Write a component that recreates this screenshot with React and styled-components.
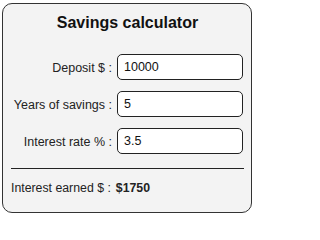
import { Fragment, useState } from "react";
import styled, { createGlobalStyle } from "styled-components";

const GlobalStyle = createGlobalStyle`
    body {
        margin: 0;
        background: #fff;
        font-family: "Liberation Sans", Arial, sans-serif;
    }
`;

const Card = styled.div`
    box-sizing: border-box;
    width: 250px;
    height: 210px;
    margin: 3px 0 0 2px;
    padding: 10px 7px 0 8px;
    background-color: #f3f3f3;
    border: 1px solid #333;
    border-radius: 10px;
    color: #222;
`;

const Title = styled.h1`
    margin: 0 0 22px;
    font-size: 16px;
    line-height: 18px;
    font-weight: bold;
    text-align: center;
    color: #111;
`;

const Form = styled.div`
    display: grid;
    grid-template-columns: 1fr 126px;
    column-gap: 5px;
    row-gap: 11px;
    align-items: center;
    padding-right: 1px;
`;

const Label = styled.label`
    font-size: 12.5px;
    text-align: right;
    padding-top: 1px;
`;

const Input = styled.input`
    box-sizing: border-box;
    width: 126px;
    height: 26px;
    padding: 0 6px;
    border: 1px solid #222;
    border-radius: 5px;
    background: #fff;
    font-family: "Liberation Sans", Arial, sans-serif;
    font-size: 12.5px;
    color: #111;
    outline: none;
`;

const Divider = styled.hr`
    margin: 14px 0 0;
    border: none;
    border-top: 1px solid #222;
    height: 0;
`;

const Result = styled.div`
    margin-top: 12px;
    font-size: 12.3px;
    line-height: 14px;

    & strong {
        margin-left: 5px;
    }
`;

const fields = [
    { key: "deposit", label: "Deposit $ :" },
    { key: "years", label: "Years of savings :" },
    { key: "rate", label: "Interest rate % :" },
];

const App = () => {
    const [values, setValues] = useState({ deposit: "10000", years: "5", rate: "3.5" });

    const earned = Math.round(
        Number(values.deposit) * Number(values.years) * Number(values.rate) / 100
    );

    return (
        <>
            <GlobalStyle />
            <Card>
                <Title>Savings calculator</Title>
                <Form>
                    {fields.map((f) => (
                        <Fragment key={f.key}>
                            <Label htmlFor={f.key}>{f.label}</Label>
                            <Input
                                id={f.key}
                                value={values[f.key]}
                                onChange={(e) => setValues({ ...values, [f.key]: e.target.value })}
                            />
                        </Fragment>
                    ))}
                </Form>
                <Divider />
                <Result>
                    Interest earned $ :<strong>${earned}</strong>
                </Result>
            </Card>
        </>
    );
};

export default App;
